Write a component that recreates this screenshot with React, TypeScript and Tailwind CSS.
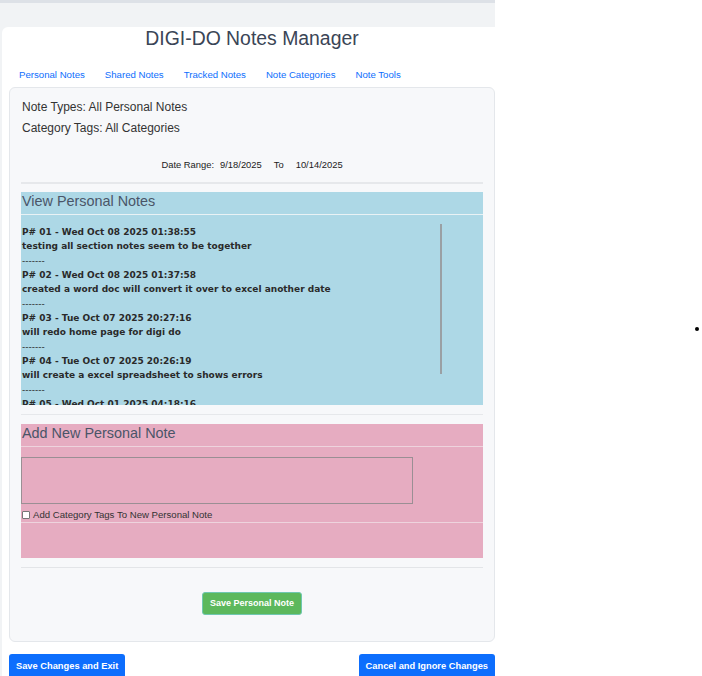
import React from "react";

const tabs = ["Personal Notes", "Shared Notes", "Tracked Notes", "Note Categories", "Note Tools"];

const notes = [
  { head: "P# 01 - Wed Oct 08 2025 01:38:55", body: "testing all section notes seem to be together" },
  { head: "P# 02 - Wed Oct 08 2025 01:37:58", body: "created a word doc will convert it over to excel another date" },
  { head: "P# 03 - Tue Oct 07 2025 20:27:16", body: "will redo home page for digi do" },
  { head: "P# 04 - Tue Oct 07 2025 20:26:19", body: "will create a excel spreadsheet to shows errors" },
  { head: "P# 05 - Wed Oct 01 2025 04:18:16", body: "checking the list" },
];

const sans = "font-['Liberation_Sans',Arial,sans-serif]";

export default function App() {
  return (
    <div className={`flex min-h-[676px] bg-white ${sans}`}>
      <div className="w-[495px] h-[676px] shrink-0 overflow-hidden bg-[#f1f3f5] border-t-[3px] border-[#dde1e7]">
        <div className="ml-[2px] mt-[24px] w-[500px] min-h-[660px] bg-white rounded-tl-[6px] rounded-tr-[6px]">
          <h1 className="text-center text-[19.4px] leading-[22px] text-[#3a4556]">
            DIGI-DO Notes Manager
          </h1>

          <nav className="mt-[19px] flex gap-[20px] pl-[17px] text-[9.65px] leading-[14px] text-[#0d6efd]">
            {tabs.map((t) => (
              <a key={t} href="#">
                {t}
              </a>
            ))}
          </nav>

          <div className="mt-[5px] ml-[7px] w-[486px] h-[555px] rounded-[6px] border border-[#e4e7eb] bg-[#f7f8fa] px-[11px]">
            <div className="pt-[9px] pl-[1px] text-[12px] leading-[20px] text-[#333]">
              <div>Note Types: All Personal Notes</div>
              <div className="mt-[1px]">Category Tags: All Categories</div>
            </div>

            <div className="mt-[21px] flex justify-center text-[9.4px] leading-[12px] text-[#222]">
              <span>Date Range:</span>
              <span className="ml-[6px]">9/18/2025</span>
              <span className="ml-[12px]">To</span>
              <span className="ml-[12px]">10/14/2025</span>
            </div>

            <div className="mt-[11px] h-[2px] bg-[#e6e8eb]" />

            {/* view notes */}
            <section className="mt-[8px] h-[213px] bg-[#add8e6]">
              <h2 className="h-[23px] pl-[1px] text-[14.4px] leading-[18px] text-[#4a5568] border-b-[1px] border-[#e9f2f5]">
                View Personal Notes
              </h2>
              <div className="relative h-[190px] overflow-hidden pt-[10px] pl-[1px] text-[9px] leading-[14.33px] text-[#2a2a2a] font-['DejaVu_Sans',Verdana,sans-serif] font-bold">
                {notes.map((n) => (
                  <div key={n.head}>
                    <div>{n.head}</div>
                    <div>{n.body}</div>
                    <div className="font-normal text-[9px]">-------</div>
                  </div>
                ))}
                <div className="absolute left-[419px] top-[9px] h-[150px] w-[2px] bg-[#9aa0a4]" />
              </div>
            </section>

            <div className="mt-[9px] h-[1px] bg-[#e6e8eb]" />

            {/* add note */}
            <section className="mt-[9px] h-[134px] bg-[#e6acc1]">
              <h2 className="h-[23px] pl-[1px] text-[14.4px] leading-[18px] text-[#4a5568] border-b-[1px] border-[#eed3dd]">
                Add New Personal Note
              </h2>
              <textarea className="mt-[10px] block w-[392px] h-[47px] border border-[#9a8f94] bg-transparent resize-none" />
              <label className="mt-[5px] flex items-center gap-[3px] text-[9.6px] leading-[12px] text-[#333]">
                <input type="checkbox" className="ml-[1px] w-[8px] h-[8px] m-0 appearance-none border border-[#777] bg-white rounded-[1px]" />
                Add Category Tags To New Personal Note
              </label>
              <div className="mt-[1px] h-[1px] bg-[#eed3dd]" />
            </section>

            <div className="mt-[9px] h-[1px] bg-[#e3e5e8]" />

            <div className="mt-[24px] flex justify-center">
              <button className="h-[23px] px-[7px] rounded-[3px] border border-[#6fc7b0] bg-[#5cb85c] text-[9px] font-bold text-white">
                Save Personal Note
              </button>
            </div>
          </div>

          <div className="mt-[12px] ml-[7px] w-[486px] flex justify-between">
            <button className="h-[26px] px-[7px] rounded-[3px] bg-[#0d6efd] text-[9.3px] font-bold text-white">
              Save Changes and Exit
            </button>
            <button className="h-[26px] px-[7px] rounded-[3px] bg-[#0d6efd] text-[9.3px] font-bold text-white">
              Cancel and Ignore Changes
            </button>
          </div>
        </div>
      </div>

      <ul className="ml-[215px] mt-[319px] list-disc text-[14px] leading-[18px] text-black">
        <li className="h-[18px]"></li>
      </ul>
    </div>
  );
}
